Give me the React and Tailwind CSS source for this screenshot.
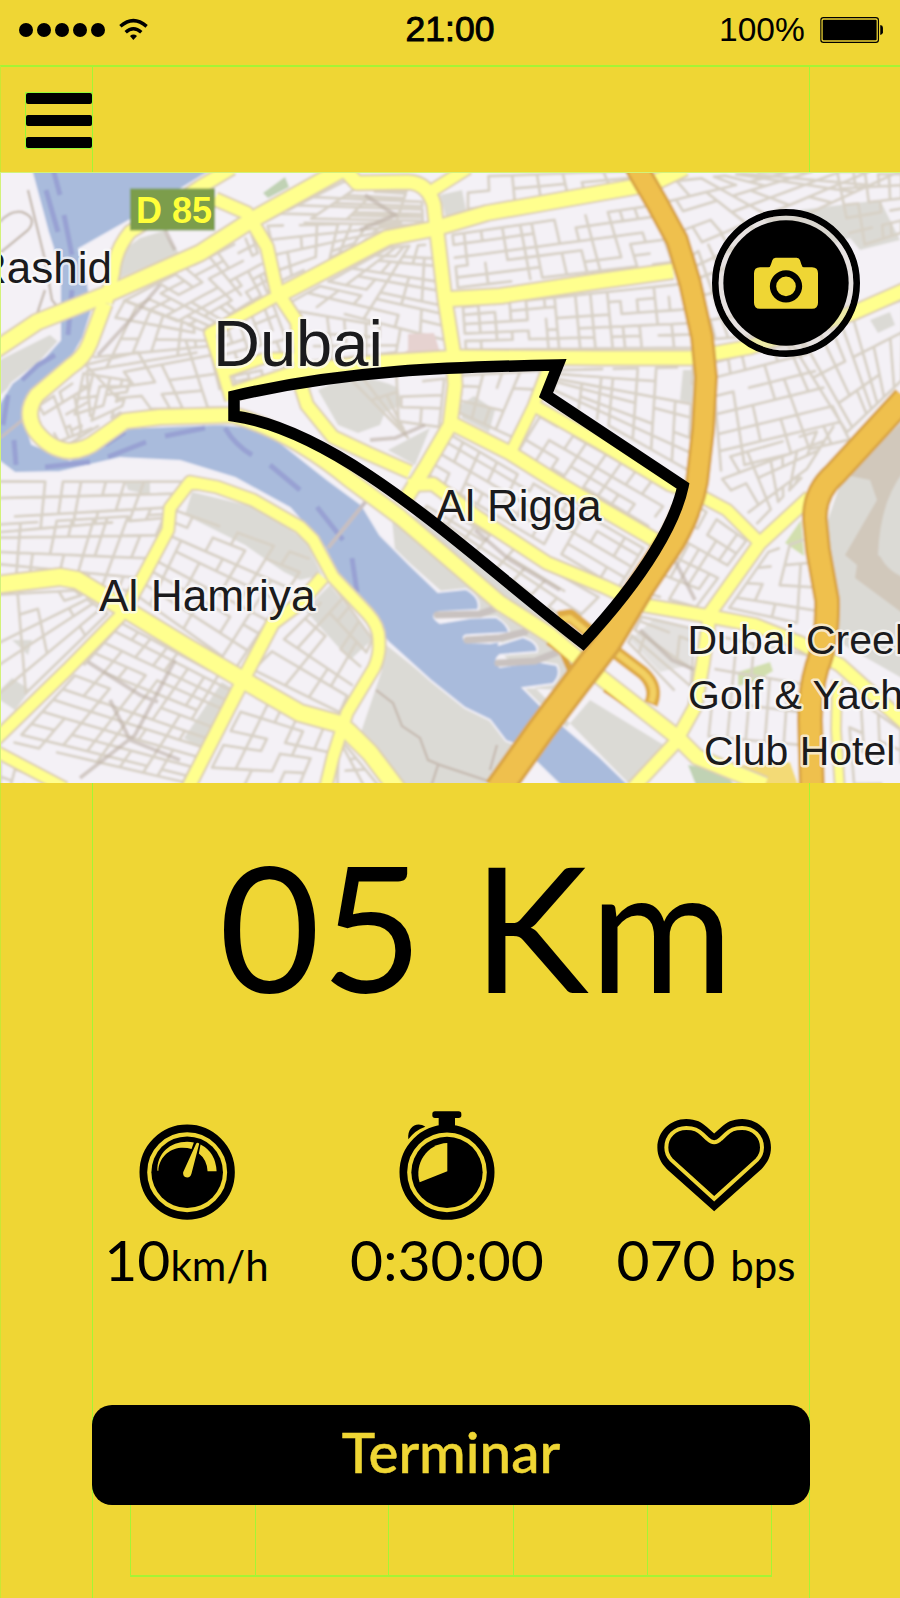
import React from "react";

/* Small deterministic generator so the side streets are stable between renders. */
function makeRandom(seed) {
  let s = seed;
  return () => {
    s = (s * 16807) % 2147483647;
    return s / 2147483647;
  };
}

/* Builds an irregular street grid inside a quadrilateral (corners clockwise). */
function streetGrid([a, b, c, d], cols, rows, seed) {
  const rnd = makeRandom(seed * 7919 + 13);
  const us = Array.from({ length: cols + 1 }, (_, i) => (i + (rnd() - 0.5) * 0.5) / cols);
  const vs = Array.from({ length: rows + 1 }, (_, j) => (j + (rnd() - 0.5) * 0.4) / rows);
  const at = (u, v) =>
    [0, 1]
      .map((k) =>
        (a[k] * (1 - u) * (1 - v) + b[k] * u * (1 - v) + c[k] * u * v + d[k] * (1 - u) * v).toFixed(1)
      )
      .join(" ");
  let path = "";
  for (let j = 0; j <= rows; j++) {
    for (let i = 0; i <= cols; i++) {
      const p = at(us[i], vs[j]);
      if (i < cols && rnd() < 0.82) path += `M${p}L${at(us[i + 1], vs[j])}`;
      if (j < rows && rnd() < 0.72) path += `M${p}L${at(us[i], vs[j + 1])}`;
    }
  }
  return path;
}

const DISTRICTS = [
  [[[128, 300], [255, 235], [272, 290], [205, 330]], 11, 6],
  [[[128, 300], [205, 330], [215, 350], [90, 372]], 6, 4],
  [[[90, 365], [205, 338], [222, 405], [130, 408]], 5, 4],
  [[[85, 372], [130, 380], [120, 412], [70, 442]], 5, 5],
  [[[40, 405], [85, 375], [90, 430], [60, 442]], 4, 4],
  [[[268, 222], [345, 182], [425, 188], [430, 225]], 10, 4],
  [[[268, 225], [420, 222], [385, 232], [282, 282]], 9, 4],
  [[[290, 300], [388, 248], [432, 245], [445, 340]], 8, 6],
  [[[290, 312], [400, 330], [396, 352], [300, 362]], 6, 3],
  [[[218, 332], [275, 305], [292, 350], [226, 362]], 5, 4],
  [[[232, 376], [300, 362], [300, 378], [236, 390]], 5, 2],
  [[[465, 180], [632, 172], [640, 185], [465, 210]], 7, 2],
  [[[450, 235], [655, 205], [675, 262], [455, 288]], 12, 5],
  [[[460, 307], [685, 283], [692, 348], [463, 350]], 14, 5],
  [[[655, 185], [760, 172], [900, 172], [690, 270]], 9, 5],
  [[[690, 255], [720, 235], [780, 335], [710, 340]], 3, 4],
  [[[840, 172], [900, 172], [900, 235], [855, 250]], 5, 5],
  [[[715, 362], [800, 340], [850, 440], [725, 470]], 6, 6],
  [[[795, 345], [900, 305], [900, 385], [850, 435]], 9, 3],
  [[[710, 460], [835, 425], [800, 480], [760, 525]], 7, 4],
  [[[465, 375], [545, 370], [510, 440], [460, 415]], 4, 3],
  [[[560, 370], [695, 367], [690, 470], [555, 395]], 7, 6],
  [[[540, 418], [670, 492], [645, 525], [520, 450]], 8, 3],
  [[[448, 432], [640, 545], [615, 585], [430, 475]], 11, 4],
  [[[430, 500], [600, 595], [570, 625], [420, 515]], 8, 3],
  [[[400, 385], [445, 380], [440, 425], [400, 420]], 2, 3],
  [[[340, 370], [398, 370], [398, 420], [410, 440]], 3, 2],
  [[[695, 500], [750, 540], [700, 605], [650, 590]], 5, 5],
  [[[765, 555], [815, 540], [822, 630], [725, 608]], 4, 4],
  [[[640, 615], [695, 625], [690, 710], [625, 640]], 4, 4],
  [[[715, 635], [810, 655], [805, 740], [705, 730]], 5, 3],
  [[[842, 690], [900, 730], [900, 783], [850, 783]], 3, 3],
  [[[0, 482], [185, 482], [165, 520], [0, 535]], 9, 3],
  [[[0, 525], [165, 515], [130, 595], [0, 575]], 9, 4],
  [[[0, 593], [75, 590], [110, 612], [0, 720]], 4, 5],
  [[[178, 512], [310, 560], [240, 665], [140, 595]], 7, 7],
  [[[125, 622], [235, 682], [180, 783], [15, 745]], 8, 11],
  [[[335, 590], [372, 640], [340, 712], [255, 670]], 5, 5],
  [[[250, 695], [340, 732], [320, 783], [205, 783]], 6, 5],
  [[[345, 745], [375, 783], [335, 783], [338, 750]], 3, 3],
  [[[0, 765], [50, 783], [30, 800], [0, 790]], 3, 2],
];

const STREETS = DISTRICTS.map(([quad, c, r], i) => streetGrid(quad, c, r, i + 1)).join("");

const YELLOW_ROADS = [
  ["M-5 350L37 322L110 293L200 253L250 221L300 193L345 168", 15],
  ["M106 303L113 273Q115 250 130 232L170 207L200 187L232 168", 12],
  ["M215 199L247 213L267 247L277 292L297 322L300 350L300 383L307 405L333 437L367 453L410 472", 12],
  ["M275 297L300 284L387 238L433 229L487 213L533 205L600 193L640 186L660 180L685 168", 14],
  ["M275 297L210 333L223 373L231 400", 10],
  ["M223 373L265 358L300 358", 9],
  ["M345 170L357 183L408 182Q428 183 434 205L437 232L445 300L453 350L455 385L450 425L425 468L402 505", 13],
  ["M433 190L468 168", 11],
  ["M450 299L500 296L600 281L673 271", 14],
  ["M231 394L300 371L380 362L460 357L600 358L690 358L750 347L853 313L905 290", 13],
  ["M105 303L90 343Q84 358 70 367L37 395Q24 412 35 430Q50 450 70 451Q86 450 98 440L125 421L160 417L233 415Q290 431 350 480L400 517L500 603L550 635L600 677L677 737L697 757L765 785", 14],
  ["M453 424L510 453L553 480L600 508L655 540", 13],
  ["M548 368L533 407L511 452", 10],
  ["M533 405L600 443L670 485L697 494L727 510L760 543", 11],
  ["M408 485L433 484L477 517L547 563L605 587L643 605L713 617L755 625L800 643L840 665L905 723", 12],
  ["M810 497L760 543L710 613L703 663L695 707L675 743L633 788", 12],
  ["M837 680L836 730L840 790", 8],
  ["M-5 585L60 577L77 580L123 608L187 647L243 680L300 713L340 724L350 733L370 753L398 790", 16],
  ["M-5 740L67 670L123 613L143 577L168 530L170 508L190 482L217 487L253 500L300 527L313 540L333 577L367 613Q380 627 379 642Q380 655 374 668L347 713L333 757L325 790", 11],
  ["M187 790L243 680L273 623L300 603L323 577", 12],
  ["M-5 751L65 788", 10],
];

const ORANGE_NORTH = "M635 165L657 203L677 240L690 283L702 337L706 377L703 430L697 482Q692 510 674 540";
const ORANGE_SOUTH = "M686 510Q682 522 672 540L640 588L607 643L577 682L540 731L498 790";
const ORANGE_EAST = "M905 398L835 474Q814 492 815 520L818 550L827 600Q828 640 817 667Q810 690 810 720L812 790";
const ROUTE = "M234 416V396C345 370 450 367 558 365L546 395L683 486C676 520 648 573 583 643C470 556 345 432 234 416Z";

function MapLabel({ x, y, size, children, anchor = "start" }) {
  return (
    <g fontSize={size} textAnchor={anchor} className="font-['Liberation_Sans',sans-serif]">
      <text
        x={x}
        y={y}
        fill="#1b1b1d"
        stroke="#fbfafb"
        strokeWidth="5"
        strokeOpacity="0.7"
        strokeLinejoin="round"
        paintOrder="stroke"
        style={{ fontKerning: "normal" }}
      >
        {children}
      </text>
    </g>
  );
}

function CityMap() {
  return (
    <svg viewBox="0 172 900 611" className="block h-[611px] w-[900px]" role="img">
      <defs>
        <filter id="soft" x="0" y="0" width="1" height="1">
          <feGaussianBlur stdDeviation="0.8" />
        </filter>
      </defs>
      <rect y="172" width="900" height="611" fill="#f4f1f6" />
      <g filter="url(#soft)">
        <rect y="165" width="900" height="625" fill="#f4f1f6" />
        {/* built-up and green areas */}
        <g fill="#dbdad5">
          <path d="M119 278L121 252L140 238L163 231L179 253Z" />
          <path d="M0 360L50 335L62 345L30 370L0 395Z" />
          <path d="M318 390Q360 368 398 388L402 405L385 412L380 425L358 433L338 425Z" />
          <path d="M440 195L462 190L466 210L446 218Z" />
          <path d="M388 450L430 428L415 465Z" />
          <path d="M460 405L474 396L495 410L489 432L462 418Z" />
          <path d="M192 492L258 508L305 540L322 575L300 580L284 572L245 545L185 515Z" />
          <path d="M330 585L372 640L350 660L305 610Z" />
          <path d="M222 682L232 688L200 748L184 738Z" />
          <path d="M380 640L430 680L480 712L515 745L505 790L400 790L360 735L382 670Z" />
          <path d="M392 520L420 515L565 625L580 665L560 690L523 688L560 735L590 700L672 750L635 790L440 590L395 550Z" />
          <path d="M630 640L655 618L692 628L690 665L660 672Z" opacity=".7" />
          <path d="M845 470L905 415L905 680L835 640L828 520Z" />
          <path d="M760 215L880 200L900 240L860 250L850 238L800 255Z" />
          <path d="M870 320L890 312L895 325L878 333Z" />
          <path d="M12 640L32 640L28 655Z M0 690L12 678L30 690L15 710L0 700Z" />
          <path d="M125 482L150 480L150 495L128 490Z M683 370L695 370L693 403L680 400Z" />
        </g>
        <path d="M845 475L905 420V470Q880 500 878 555L905 575V615L855 578L857 565L845 555L877 500L870 480Z" fill="#d1c8bb" />
        <path d="M905 520Q880 530 879 553Q885 570 905 578Z" fill="#dbdad5" />
        <g fill="#c0d2b4">
          <path d="M263 193L285 177L289 187L268 198Z" />
          <path d="M688 765L722 770L738 790H698Z" />
        </g>
        <g fill="#d2dfae">
          <path d="M785 543L801 520L804 556Z" />
          <path d="M738 672L770 662L773 671L755 682L738 686Z" />
        </g>
        <path d="M742 765L790 762L800 790H760Z" fill="#f3da76" />

        {/* side streets */}
        <path d={STREETS} fill="none" stroke="#d8d1c6" strokeWidth="2.8" strokeLinecap="round" />
        <g fill="none" stroke="#bdb0a6" strokeWidth="4" opacity=".6">
          <path d="M160 285L130 320L98 355M88 662L140 695L158 702M175 660L135 735L80 778M110 700L130 740L180 760" />
          <path d="M672 555L695 600M640 630L672 660L695 670M370 440L395 438L425 425M475 530L510 560L560 590" />
          <path d="M165 230L175 250M365 195L395 215L360 230" />
        </g>
        <path d="M391 360L408 350V334L434 333L439 349L444 352V361Z" fill="#e6d2d0" />
        <g fill="none" stroke="#c8bdb4" strokeWidth="2.5">
          <path d="M376 690L393 703L402 726L420 738L428 760L440 765L500 785M438 765L430 790M497 745L490 770" />
          <path d="M0 253L28 230Q38 218 22 212Q10 210 0 222M28 190L45 260L52 300L60 310M45 290L35 320" />
        </g>

        {/* water */}
        <g fill="#a9bbdc" stroke="#f1eff6" strokeWidth="2">
          <path d="M30 165L48 232L60 270V310L60 340L40 362L12 383L-5 410V458L15 473L60 472L120 458L180 461L235 478L290 508L325 548L345 590L388 642L430 680L465 708L490 720L506 741L520 746L565 790H634L600 757L568 730L545 710L523 688L553 684Q562 675 557 665L535 661L500 667Q493 660 500 655L537 652Q540 643 523 637L498 645Q505 640 490 643L466 642Q460 635 470 635L509 633Q509 625 496 617L470 618L440 623Q428 615 440 612L478 610Q482 598 466 589L438 592L410 565L380 535L362 505L328 480L290 450L262 428L220 424L125 428L98 446L70 460L32 444L22 412L35 394L68 364L83 338L92 310L87 278L79 249L130 220L220 165Z" />
        </g>
        <g fill="none" stroke="#98a1d3" strokeWidth="5">
          <path d="M52 165L60 195M46 190L58 232M64 215L72 255M72 290L68 335M55 355L38 365L22 380M8 395L3 425M14 440L16 465M45 467L90 462M105 445L125 432M108 457L146 442M165 436L205 428M225 428Q235 445 252 455M270 465L300 490M317 507L343 540M352 558L357 592" />
        </g>
        <path d="M328 548L367 500" stroke="#c8bfc0" strokeWidth="4" />
        <path d="M0 438L25 418" stroke="#c8bfc0" strokeWidth="3" />
        <g stroke="#c9c2c0" strokeWidth="7" strokeLinecap="round" fill="none">
          <path d="M437 615L480 614L500 607M467 640L500 638L525 632M498 663L535 661L558 652" />
        </g>

        {/* avenues */}
        <g fill="none" strokeLinejoin="round">
          {YELLOW_ROADS.map(([d, w]) => (
            <path key={d} d={d} stroke="#dccdb0" strokeWidth={w + 4} />
          ))}
          <path d="M548 642L562 652L570 670" stroke="#d9a23f" strokeWidth="6" />
          <path d="M604 690L640 714" stroke="#d9a23f" strokeWidth="4" />
          {YELLOW_ROADS.map(([d, w]) => (
            <path key={d} d={d} stroke="#ffff8e" strokeWidth={w} />
          ))}
          <path d="M558 618L570 616L592 634M610 648L643 673Q658 687 651 704" stroke="#dfab45" strokeWidth="14" />
          <path d="M558 620L570 618L592 636M610 648L643 673Q658 687 651 702" stroke="#f3d062" strokeWidth="6" />
          <path d={ORANGE_NORTH} stroke="#d9a544" strokeWidth="24" />
          <path d={ORANGE_EAST} stroke="#d9a544" strokeWidth="26" />
          <path d={ORANGE_SOUTH} stroke="#d9a544" strokeWidth="30" />
          <path d={ORANGE_NORTH} stroke="#efc04d" strokeWidth="18" />
          <path d={ORANGE_EAST} stroke="#efc04d" strokeWidth="20" />
          <path d={ORANGE_SOUTH} stroke="#efc04d" strokeWidth="23" />
        </g>
        <rect x="130" y="188.500" width="85" height="42" fill="#7b9d4b" />
      </g>

      {/* place names */}
      <text x="136" y="222.500" fontSize="36" fontWeight="700" fill="#ffff3a" textLength="76" className="font-['Liberation_Sans',sans-serif]">
        D 85
      </text>
      <MapLabel x={112} y={283} size={44} anchor="end">Rashid</MapLabel>
      <MapLabel x={213} y={366} size={65}>Dubai</MapLabel>
      <MapLabel x={436} y={521} size={43.8}>Al Rigga</MapLabel>
      <MapLabel x={99} y={611} size={44.3}>Al Hamriya</MapLabel>
      <MapLabel x={687.500} y={654} size={41}>Dubai Creek</MapLabel>
      <MapLabel x={688} y={709} size={41}>Golf &amp; Yacht</MapLabel>
      <MapLabel x={704} y={765} size={41}>Club Hotel</MapLabel>

      <path d={ROUTE} fill="none" stroke="#000" strokeWidth="11.500" strokeMiterlimit="8" />
      <path d="M0.500 172V783M0 172.500H900" stroke="#d3f27a" strokeWidth="1" />
    </svg>
  );
}

function CameraIcon() {
  return (
    <svg viewBox="336 115 444 444" className="block size-full">
      <circle cx="558" cy="337" r="212" fill="none" stroke="#000" strokeWidth="20" />
      <circle cx="558" cy="337" r="195" fill="none" stroke="#d8d0c8" strokeOpacity=".45" strokeWidth="14" />
      <circle cx="558" cy="337" r="188" />
      <path
        d="M480 290H505Q511 290 513 281L517 269Q519 261 527 261H590Q598 261 600 269L604 281Q606 290 612 290H636Q654 290 654 308V396Q654 414 636 414H480Q462 414 462 396V308Q462 290 480 290Z"
        fill="#efd634"
      />
      <circle cx="558" cy="347" r="39" fill="#efd634" stroke="#000" strokeWidth="19" />
    </svg>
  );
}

function GaugeIcon() {
  return (
    <svg viewBox="147 102 287 287" className="block h-[96px] w-[96px]">
      <circle cx="291" cy="246" r="131" fill="none" stroke="#000" strokeWidth="23" />
      <circle cx="291" cy="246" r="107" />
      <path d="M202 242C200 190 240 155 291 155Q301 155 311 157L304 177Q290 172 272 173C235 176 206 205 205 242Z" fill="#efd634" />
      <path d="M331 163Q376 186 379 243H352Q350 208 326 190Z" fill="#efd634" />
      <path d="M318 160Q323 156 327 161L304 250Q301 262 291 262Q277 260 279 246Z" fill="#efd634" />
    </svg>
  );
}

function StopwatchIcon() {
  return (
    <svg viewBox="929 62 288 327" className="block h-[109px] w-[96px]">
      <circle cx="1073" cy="246" r="131" fill="none" stroke="#000" strokeWidth="23" />
      <circle cx="1073" cy="246" r="107" />
      <path d="M1074 158V243L991 276C974 222 1012 160 1074 158Z" fill="#efd634" />
      <path d="M1048 112V82H1097V112Z" />
      <rect x="1029" y="63" width="87" height="20" rx="8" />
      <path d="M957 147C953 108 984 92 1008 109Q976 120 957 147Z" />
    </svg>
  );
}

function HeartIcon() {
  return (
    <svg viewBox="470 86 343 280" className="block h-[93px] w-[114px]">
      <path d="M642 364L500 237C482 219 471 198 471 172C471 124 510 86 558 86C588 86 606 97 620 110L642 130L664 110C678 97 697 86 726 86C774 86 813 124 813 172C813 198 802 219 784 237Z" />
      <path
        d="M642 326L513 209C502 198 498 186 498 172C498 138 524 113 558 113C582 113 593 119 607 132L622 146Q642 166 662 146L677 132C691 119 702 113 726 113C760 113 786 138 786 172C786 186 782 198 771 209Z"
        fill="none"
        stroke="#efd634"
        strokeWidth="12"
      />
    </svg>
  );
}

function StatusBar() {
  return (
    <div className="grid h-[65px] shrink-0 grid-cols-[1fr_auto_1fr] font-['Liberation_Sans',sans-serif] leading-none">
      <div className="flex items-start pl-[19px]">
        <div className="mt-[22.5px] flex gap-[4px]">
          {[0, 1, 2, 3, 4].map((n) => (
            <span key={n} className="size-[14px] rounded-full bg-black" />
          ))}
        </div>
        <svg viewBox="357 54 87 68" className="mt-[18px] ml-[14px] h-[22.6px] w-[29px]">
          <path d="M361 79Q400 45 440 79M377 97Q400 76 424 97" fill="none" stroke="#000" strokeWidth="10.500" />
          <path d="M390 108Q400 100 411 108L400 120Z" />
        </svg>
      </div>
      <div className="pt-[12px] text-[35.5px] [-webkit-text-stroke:0.9px_black]">21:00</div>
      <div className="flex items-start justify-end pr-[17px]">
        <span className="mt-[13px] text-[33.5px]">100%</span>
        <svg viewBox="1109 51 190 79" className="mt-[17px] ml-[15px] h-[26.3px] w-[63.3px]">
          <rect x="1111.500" y="53" width="173" height="74" rx="8" fill="none" stroke="#000" strokeWidth="3.500" />
          <rect x="1117" y="59.500" width="162" height="61" rx="3" />
          <path d="M1290 75Q1298 76 1298 83V97Q1298 104 1290 105Z" />
        </svg>
      </div>
    </div>
  );
}

function Header() {
  return (
    <header className="flex h-[107px] shrink-0 border-t-2 border-l border-t-[#a4f534] border-l-[#c9e734]">
      <div className="flex w-[92px] justify-end border-r border-[#a4f534] pt-[25px]">
        <div className="-mr-px flex h-[57px] w-[68px] flex-col justify-between border border-[#96fa36]">
          <span className="h-[11px] rounded-[2px] bg-black" />
          <span className="h-[11px] rounded-[2px] bg-black" />
          <span className="h-[11px] rounded-[2px] bg-black" />
        </div>
      </div>
      <div className="flex-1" />
      <div className="w-[91px] border-l border-[#a4f534]" />
    </header>
  );
}

function Stat({ icon, className, children }) {
  return (
    <div className={className}>
      <div className="flex h-[109px] w-full items-end justify-center">{icon}</div>
      <div className="mt-[11px] text-center text-[57px] leading-none whitespace-nowrap">{children}</div>
    </div>
  );
}

export default function App() {
  return (
    <div className="flex h-[1598px] w-[900px] flex-col overflow-hidden bg-[#efd634] font-['Lato',sans-serif] text-black">
      <StatusBar />
      <Header />
      <div className="relative h-[611px] shrink-0">
        <CityMap />
        <button className="absolute top-[36.600px] left-[712px] size-[148px] rounded-full">
          <CameraIcon />
        </button>
      </div>
      <main className="flex flex-1">
        <div className="w-[92px] border-l border-[#c9e734]" />
        <div className="flex w-[718px] flex-col border-x border-[#a4f534]">
          <div className="pt-[55px] pl-[51px] text-center text-[175px] leading-none tracking-[1px] whitespace-nowrap [word-spacing:3px]">
            05 Km
          </div>
          <div className="mt-[98px] flex">
            <Stat className="w-[187px]" icon={<GaugeIcon />}>
              10<span className="text-[42px]">km/h</span>
            </Stat>
            <Stat className="w-[334px]" icon={<StopwatchIcon />}>
              0:30:00
            </Stat>
            <Stat
              className="w-[184px]"
              icon={<div className="mb-[8px] ml-[16px]"><HeartIcon /></div>}
            >
              070 <span className="text-[42px]">bps</span>
            </Stat>
          </div>
          <button className="-mx-px mt-[117px] h-[100px] shrink-0 rounded-[20px] bg-black pb-[8px] text-[56.5px] leading-none font-medium text-[#efd634] [-webkit-text-stroke:0.5px_#efd634]">
            Terminar
          </button>
          <div className="ml-[37px] grid h-[72px] w-[642px] shrink-0 grid-cols-[125px_133px_125px_134px_124px] border-b-2 border-l border-[#a4f534]">
            <span className="border-r border-[#a4f534]" />
            <span className="border-r border-[#a4f534]" />
            <span className="border-r border-[#a4f534]" />
            <span className="border-r border-[#a4f534]" />
            <span className="border-r border-[#a4f534]" />
          </div>
        </div>
      </main>
    </div>
  );
}
